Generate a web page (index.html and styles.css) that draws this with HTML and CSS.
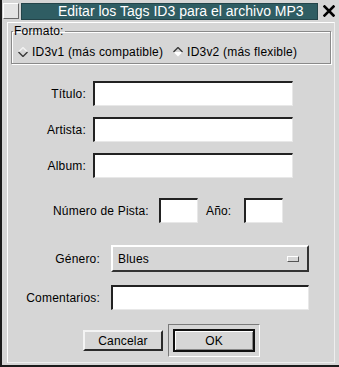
FILE: index.html
```html
<!DOCTYPE html>
<html lang="es">
<head>
  <meta charset="UTF-8" />
  <title>Editar los Tags ID3</title>
  <link rel="stylesheet" href="styles.css">
</head>
<body>
  <div class="window">
    <div class="titlebar">
      <span class="menu-btn"></span>
      <div class="title">Editar los Tags ID3 para el archivo MP3</div>
      <svg class="close" width="12" height="12" viewBox="0 0 12 12">
        <path d="M1.5 1.5 L10.5 10.5 M10.5 1.5 L1.5 10.5" stroke="#000" stroke-width="2.6" stroke-linecap="square" />
      </svg>
    </div>
    <div class="client">
      <fieldset class="format">
        <legend>Formato:</legend>
        <div class="radios">
          <label class="radio">
            <svg width="10" height="10" viewBox="0 0 10 10">
              <path d="M0.5 5 L5 0.5 L9.5 5" fill="none" stroke="#f4f4f4" stroke-width="1.2" />
              <path d="M0.5 5 L5 9.5 L9.5 5" fill="none" stroke="#3a3a3a" stroke-width="1.4" />
            </svg>
            ID3v1 (más compatible)
          </label>
          <label class="radio">
            <svg width="10" height="10" viewBox="0 0 10 10">
              <path d="M0.5 5 L5 9.5 L9.5 5 Z" fill="#fff" />
              <path d="M0.5 5 L5 0.5 L9.5 5" fill="none" stroke="#3a3a3a" stroke-width="1.4" />
            </svg>
            ID3v2 (más flexible)
          </label>
        </div>
      </fieldset>

      <div class="fields">
        <label>Título:</label><span class="entry"></span>
        <label>Artista:</label><span class="entry"></span>
        <label>Album:</label><span class="entry"></span>
      </div>

      <div class="track-row">
        <label>Número de Pista:</label><span class="entry short"></span>
        <label class="year-label">Año:</label><span class="entry short"></span>
      </div>

      <div class="fields fields-wide">
        <label>Género:</label>
        <div class="option-menu"><span>Blues</span><span class="indicator"></span></div>
        <label>Comentarios:</label><span class="entry"></span>
      </div>

      <div class="actions">
        <button class="btn">Cancelar</button>
        <div class="default-frame"><button class="btn btn-default">OK</button></div>
      </div>
    </div>
  </div>
</body>
</html>
```

FILE: styles.css
```css
* {
  margin: 0;
  padding: 0;
  box-sizing: border-box;
}
body {
  font-family: "Liberation Sans", Arial, sans-serif;
  font-size: 12px;
  line-height: 14px;
  letter-spacing: 0.2px;
  color: #000;
  background: #d6d6d6;
}
.window {
  width: 339px;
  height: 367px;
  background: #d6d6d6;
  border-left: 2px solid #1c1c1c;
  border-bottom: 2px solid #1c1c1c;
}
.titlebar {
  display: flex;
  align-items: flex-start;
  height: 22px;
  padding: 3px 0 0 1px;
}
.menu-btn {
  width: 16px;
  height: 16px;
  border: 1px solid;
  border-color: #fff #6a6a6a #6a6a6a #fff;
  background: #e4e4e4;
}
.title {
  width: 297px;
  height: 17px;
  margin-left: 2px;
  padding-left: 36px;
  background: #2f5d63;
  border: 1px solid #234449;
  color: #fff;
  font-size: 14px;
  line-height: 15px;
  letter-spacing: 0;
  white-space: nowrap;
}
.close {
  margin: 2px 0 0 5px;
}
.client {
  height: 341px;
  margin: 0 4px 0 5px;
  border: 1px solid;
  border-color: #fff #eee #eee #fff;
}
.format {
  width: 320px;
  margin: 1px 0 0 3px;
  padding: 0 4px 4px 1px;
  border: 1px solid #8a8a8a;
  box-shadow: inset 1px 1px 0 #fff, 1px 1px 0 #fff;
}
.format legend {
  padding: 0 1px 0 1px;
}
.radios {
  display: flex;
  gap: 10px;
  padding: 7px 0 0 5px;
}
.radio {
  display: inline-flex;
  align-items: center;
  gap: 4px;
}
.fields {
  display: grid;
  grid-template-columns: 78px 200px;
  column-gap: 7px;
  row-gap: 11px;
  align-items: center;
  margin-top: 17px;
}
.fields label {
  text-align: right;
}
.entry {
  display: block;
  height: 25px;
  background: #fff;
  border-style: solid;
  border-width: 2px 1px 1px 2px;
  border-color: #222 #e8e8e8 #e8e8e8 #222;
}
.track-row {
  display: flex;
  align-items: center;
  margin-top: 20px;
  padding-left: 45px;
}
.entry.short {
  width: 39px;
  margin-left: 10px;
}
.year-label {
  margin: 0 3px 0 8px;
}
.fields-wide {
  grid-template-columns: 92px 198px;
  column-gap: 11px;
  row-gap: 13px;
  margin-top: 22px;
}
.option-menu {
  display: flex;
  align-items: center;
  justify-content: space-between;
  height: 27px;
  padding: 0 8px 0 5px;
  border: 2px solid;
  border-color: #fff #333 #333 #fff;
}
.indicator {
  width: 12px;
  height: 6px;
  border: 1px solid;
  border-color: #fff #555 #555 #fff;
}
.actions {
  display: flex;
  align-items: center;
  gap: 5px;
  margin-top: 14px;
  padding-left: 75px;
}
.btn {
  width: 80px;
  height: 21px;
  font: inherit;
  letter-spacing: inherit;
  color: #000;
  background: #d6d6d6;
  border: 2px solid;
  border-color: #f4f4f4 #2a2a2a #2a2a2a #f4f4f4;
}
.default-frame {
  width: 92px;
  height: 33px;
  padding: 4px;
  border: 1px solid;
  border-color: #7a7a7a #fff #fff #7a7a7a;
}
.btn-default {
  width: 82px;
  height: 23px;
  border: 2px solid #111;
  box-shadow: inset 1px 1px 0 #fff, inset -1px -1px 0 #888;
}
```
